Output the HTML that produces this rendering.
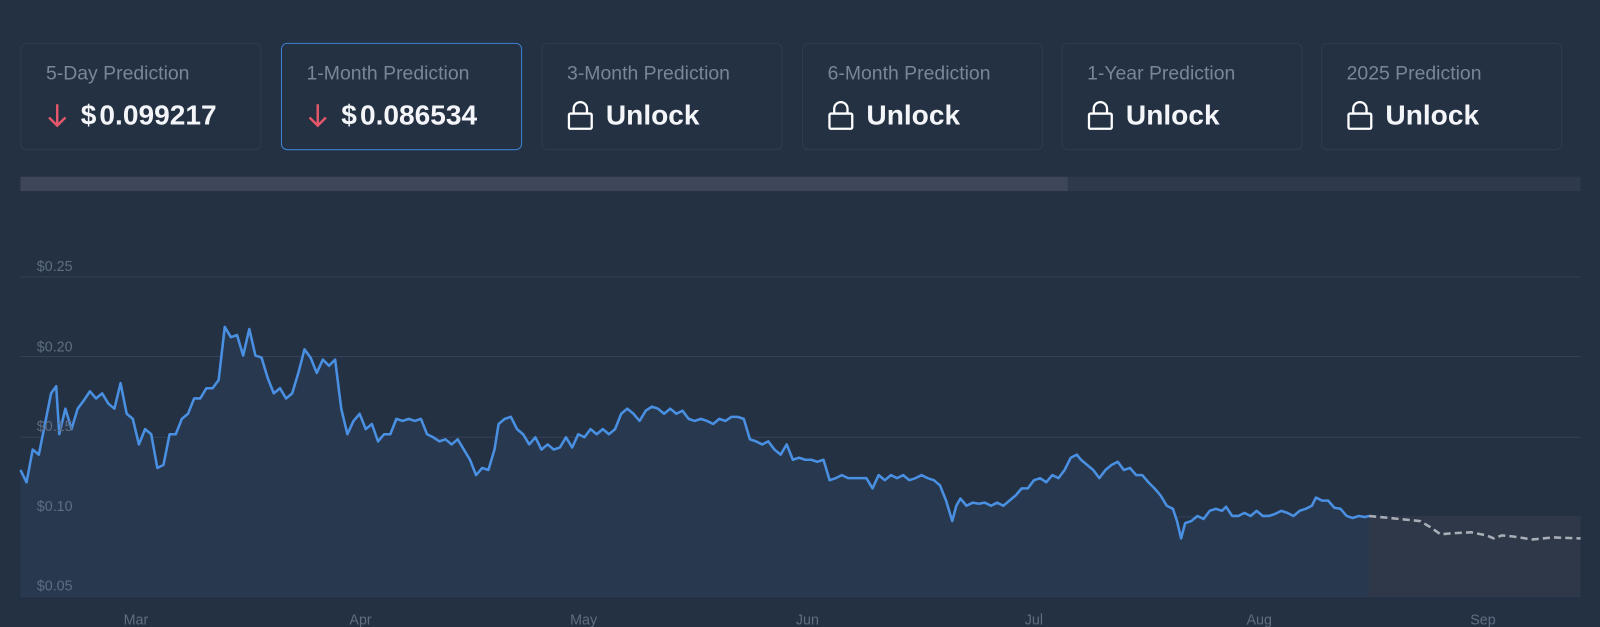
<!DOCTYPE html>
<html><head><meta charset="utf-8"><style>
body{margin:0;background:#243143;width:1600px;height:625px;overflow:hidden;font-family:"Liberation Sans",sans-serif}
#w{position:absolute;left:0;top:0;width:1566px;height:612px;transform:scale(1.0217);transform-origin:0 0}
.c{position:absolute;top:42px;width:236px;height:105px;border:1px solid #2f3b4e;border-radius:6px;box-sizing:border-box}
.c.s{border-color:#3d7fd0}
.l{position:absolute;left:24px;top:19px;font-size:19px;color:#7a8598}
.v{position:absolute;left:24px;top:54px;font-size:27.5px;font-weight:bold;color:#f3f5f8;display:flex;align-items:center;gap:12px}
.v .d{margin-right:3px}
.ax{position:absolute;font-size:14px;color:#5f6d82}
</style></head><body><div id="w">
<div class="c" style="left:20px"><div class="l">5-Day Prediction</div><div class="v"><svg width="22" height="28" viewBox="0 0 22 28"><path d="M11 3V24M3 16L11 24L19 16" stroke="#e5566a" stroke-width="2.4" fill="none"/></svg><span><span class="d">$</span>0.099217</span></div></div>
<div class="c s" style="left:275px"><div class="l">1-Month Prediction</div><div class="v"><svg width="22" height="28" viewBox="0 0 22 28"><path d="M11 3V24M3 16L11 24L19 16" stroke="#e5566a" stroke-width="2.4" fill="none"/></svg><span><span class="d">$</span>0.086534</span></div></div>
<div class="c" style="left:530px"><div class="l">3-Month Prediction</div><div class="v"><svg width="26" height="30" viewBox="0 0 28 32"><path d="M7 14V9a7 7 0 0 1 14 0v5" stroke="#fff" stroke-width="2.4" fill="none"/><rect x="2" y="14" width="24" height="16" rx="1.5" stroke="#fff" stroke-width="2.4" fill="none"/></svg>Unlock</div></div>
<div class="c" style="left:785px"><div class="l">6-Month Prediction</div><div class="v"><svg width="26" height="30" viewBox="0 0 28 32"><path d="M7 14V9a7 7 0 0 1 14 0v5" stroke="#fff" stroke-width="2.4" fill="none"/><rect x="2" y="14" width="24" height="16" rx="1.5" stroke="#fff" stroke-width="2.4" fill="none"/></svg>Unlock</div></div>
<div class="c" style="left:1039px"><div class="l">1-Year Prediction</div><div class="v"><svg width="26" height="30" viewBox="0 0 28 32"><path d="M7 14V9a7 7 0 0 1 14 0v5" stroke="#fff" stroke-width="2.4" fill="none"/><rect x="2" y="14" width="24" height="16" rx="1.5" stroke="#fff" stroke-width="2.4" fill="none"/></svg>Unlock</div></div>
<div class="c" style="left:1293px"><div class="l">2025 Prediction</div><div class="v"><svg width="26" height="30" viewBox="0 0 28 32"><path d="M7 14V9a7 7 0 0 1 14 0v5" stroke="#fff" stroke-width="2.4" fill="none"/><rect x="2" y="14" width="24" height="16" rx="1.5" stroke="#fff" stroke-width="2.4" fill="none"/></svg>Unlock</div></div>
<div style="position:absolute;left:20px;top:173px;width:1527px;height:14px;background:#2e3a4c"></div>
<div style="position:absolute;left:20px;top:173px;width:1025px;height:14px;background:#3d4759"></div>
<svg style="position:absolute;left:0;top:0" width="1566" height="612">
<g stroke="#33405a" stroke-width="1"><line x1="20" x2="1547" y1="271" y2="271"/><line x1="20" x2="1547" y1="349" y2="349"/><line x1="20" x2="1547" y1="428" y2="428"/><line x1="20" x2="1547" y1="506" y2="506"/><line x1="20" x2="1547" y1="584" y2="584"/></g>
<rect x="1340" y="505" width="207" height="79" fill="#2e3848"/>
<polygon fill="#27384f" points="20,584 20,460 26,472 32,440 38,445 44,415 50,385 55,378 58,425 64,400 70,420 76,400 82,392 88,383 94,390 100,385 106,395 112,400 118,375 124,405 130,410 136,435 142,420 148,425 154,458 160,455 166,425 172,425 178,410 184,405 190,390 196,390 202,380 208,380 214,372 220,320 226,330 232,328 238,348 244,322 250,348 256,350 262,370 268,385 274,380 280,390 286,385 292,365 298,342 304,350 310,365 316,352 322,358 328,352 334,400 340,425 346,412 352,405 358,420 364,415 370,432 376,425 382,425 388,410 394,412 400,410 406,412 412,410 418,425 424,428 430,432 436,430 442,435 448,430 454,440 460,450 466,465 472,458 478,460 484,440 488,415 494,410 500,408 506,420 512,425 518,435 524,428 530,440 536,435 542,440 548,438 554,428 560,438 566,425 572,428 578,420 584,425 590,420 596,425 602,420 608,405 614,400 620,405 626,412 632,402 638,398 644,400 650,405 656,400 662,405 668,402 674,410 680,412 686,410 692,412 698,415 704,410 710,412 716,408 722,408 728,410 734,430 740,432 746,435 752,432 758,440 764,445 770,435 776,450 782,448 788,450 794,450 800,452 806,450 812,470 818,468 824,465 830,468 836,468 842,468 848,468 854,478 860,465 866,470 872,465 878,468 884,465 890,470 896,468 902,465 908,468 914,470 920,475 926,490 932,510 936,495 940,488 946,495 952,492 958,493 964,492 970,495 976,492 982,495 988,490 994,485 1000,478 1006,478 1012,470 1018,468 1024,472 1030,465 1036,468 1042,460 1048,448 1054,445 1058,450 1064,455 1070,460 1076,468 1082,460 1088,455 1094,452 1100,460 1106,458 1112,465 1118,465 1124,472 1130,478 1136,485 1142,495 1148,498 1152,510 1156,527 1160,512 1166,510 1172,505 1178,508 1184,500 1190,498 1196,500 1200,496 1206,505 1212,505 1218,502 1224,505 1230,500 1236,505 1242,505 1248,503 1254,500 1260,502 1266,505 1272,500 1278,498 1284,495 1288,487 1294,490 1300,490 1306,497 1312,498 1318,505 1324,507 1330,505 1336,506 1340,505 1340,584"/>
<polyline fill="none" stroke="#4a90e2" stroke-width="2.5" stroke-linejoin="round" points="20,460 26,472 32,440 38,445 44,415 50,385 55,378 58,425 64,400 70,420 76,400 82,392 88,383 94,390 100,385 106,395 112,400 118,375 124,405 130,410 136,435 142,420 148,425 154,458 160,455 166,425 172,425 178,410 184,405 190,390 196,390 202,380 208,380 214,372 220,320 226,330 232,328 238,348 244,322 250,348 256,350 262,370 268,385 274,380 280,390 286,385 292,365 298,342 304,350 310,365 316,352 322,358 328,352 334,400 340,425 346,412 352,405 358,420 364,415 370,432 376,425 382,425 388,410 394,412 400,410 406,412 412,410 418,425 424,428 430,432 436,430 442,435 448,430 454,440 460,450 466,465 472,458 478,460 484,440 488,415 494,410 500,408 506,420 512,425 518,435 524,428 530,440 536,435 542,440 548,438 554,428 560,438 566,425 572,428 578,420 584,425 590,420 596,425 602,420 608,405 614,400 620,405 626,412 632,402 638,398 644,400 650,405 656,400 662,405 668,402 674,410 680,412 686,410 692,412 698,415 704,410 710,412 716,408 722,408 728,410 734,430 740,432 746,435 752,432 758,440 764,445 770,435 776,450 782,448 788,450 794,450 800,452 806,450 812,470 818,468 824,465 830,468 836,468 842,468 848,468 854,478 860,465 866,470 872,465 878,468 884,465 890,470 896,468 902,465 908,468 914,470 920,475 926,490 932,510 936,495 940,488 946,495 952,492 958,493 964,492 970,495 976,492 982,495 988,490 994,485 1000,478 1006,478 1012,470 1018,468 1024,472 1030,465 1036,468 1042,460 1048,448 1054,445 1058,450 1064,455 1070,460 1076,468 1082,460 1088,455 1094,452 1100,460 1106,458 1112,465 1118,465 1124,472 1130,478 1136,485 1142,495 1148,498 1152,510 1156,527 1160,512 1166,510 1172,505 1178,508 1184,500 1190,498 1196,500 1200,496 1206,505 1212,505 1218,502 1224,505 1230,500 1236,505 1242,505 1248,503 1254,500 1260,502 1266,505 1272,500 1278,498 1284,495 1288,487 1294,490 1300,490 1306,497 1312,498 1318,505 1324,507 1330,505 1336,506 1340,505"/>
<polyline fill="none" stroke="#a9adb5" stroke-width="2.5" stroke-dasharray="7,4" points="1340,505 1350,506 1370,508 1390,510 1400,516 1410,523 1420,522 1440,521 1455,524 1462,527 1470,524 1480,525 1500,528 1520,526 1547,527"/>
</svg>
<div class="ax" style="left:36px;top:252px">$0.25</div>
<div class="ax" style="left:36px;top:331px">$0.20</div>
<div class="ax" style="left:36px;top:409px">$0.15</div>
<div class="ax" style="left:36px;top:487px">$0.10</div>
<div class="ax" style="left:36px;top:565px">$0.05</div>
<div class="ax" style="left:121px;top:598px">Mar</div>
<div class="ax" style="left:342px;top:598px">Apr</div>
<div class="ax" style="left:558px;top:598px">May</div>
<div class="ax" style="left:779px;top:598px">Jun</div>
<div class="ax" style="left:1003px;top:598px">Jul</div>
<div class="ax" style="left:1220px;top:598px">Aug</div>
<div class="ax" style="left:1439px;top:598px">Sep</div>
</div></body></html>
